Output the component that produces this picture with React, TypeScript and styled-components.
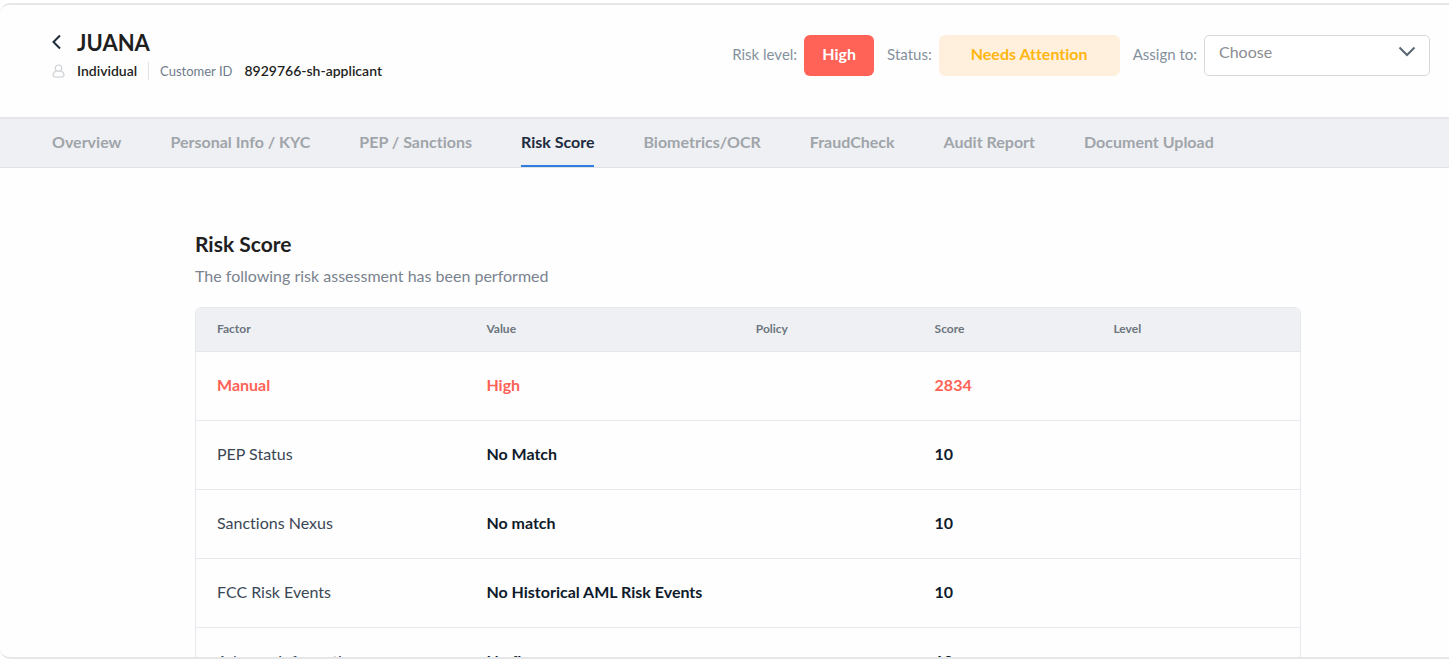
import React from "react";
import styled, { createGlobalStyle } from "styled-components";

const GlobalStyle = createGlobalStyle`
  *, *::before, *::after { box-sizing: border-box; }
  body {
    margin: 0;
    background: #fff;
    color: #1f1f22;
    font-family: Lato, "Liberation Sans", sans-serif;
    font-variant-ligatures: none;
    -webkit-font-smoothing: antialiased;
  }
  button, select { font-family: inherit; }
`;

const Shell = styled.div`
  display: flex;
  flex-direction: column;
  height: calc(100vh - 4px);
  margin: 3px 0 1px;
  overflow: hidden;
  background: #fefefe;
  border: 2px solid #e5e6e8;
  border-width: 2px 0;
  border-radius: 10px 0 0 10px;
`;

const Header = styled.header`
  display: flex;
  justify-content: space-between;
  align-items: flex-start;
  flex: none;
  min-height: 112px;
  padding: 24px 19px 0 52px;
`;

const Identity = styled.div`
  display: grid;
  grid-template-columns: 13px 1fr;
  column-gap: 12px;
  align-items: center;
`;

const BackButton = styled.button`
  display: flex;
  padding: 0 0 2px;
  border: 0;
  background: none;
  color: #1d2b3a;
  cursor: pointer;
`;

const Name = styled.h1`
  margin: 0;
  font-size: 22px;
  line-height: 28px;
  font-weight: 700;
`;

const PersonIcon = styled.svg`
  display: block;
  color: #cdd2d7;
`;

const Meta = styled.div`
  display: flex;
  align-items: center;
  height: 28px;
  font-size: 14px;
  line-height: 18px;
`;

const Kind = styled.span`
  padding-right: 11px;
  margin-right: 11px;
  border-right: 1px solid #dfe2e6;
  font-weight: 600;
`;

const MetaLabel = styled.span`
  margin-right: 12px;
  color: #6f7c8b;
  font-size: 13px;
`;

const Strong = styled.span`
  font-weight: 600;
`;

const Controls = styled.div`
  display: flex;
  align-items: center;
  gap: 13px;
  padding-top: 6px;
`;

const Field = styled.div`
  display: flex;
  align-items: center;
  gap: 7px;
`;

const FieldLabel = styled.label`
  padding-bottom: 4px;
  color: #84919d;
  font-size: 15px;
  line-height: 20px;
`;

const Pill = styled.span<{ $tone: "danger" | "warning" }>`
  display: flex;
  align-items: center;
  justify-content: center;
  width: ${(p) => (p.$tone === "danger" ? "70px" : "181px")};
  height: 41px;
  padding-bottom: 4px;
  border-radius: 6px;
  background: ${(p) => (p.$tone === "danger" ? "#ff6257" : "#fff0dd")};
  color: ${(p) => (p.$tone === "danger" ? "#fff" : "#ffb611")};
  font-size: 16px;
  font-weight: 700;
`;

const SelectBox = styled.div`
  display: grid;
  align-items: center;
  width: 226px;
  & > * { grid-area: 1 / 1; }
  & > svg {
    justify-self: end;
    margin: 0 14px 8px 0;
    pointer-events: none;
    color: #5a6772;
  }
`;

const Select = styled.select`
  appearance: none;
  width: 100%;
  height: 41px;
  padding: 0 40px 8px 14px;
  border: 1px solid #d5d8dc;
  border-radius: 5px;
  background: #fff;
  color: #8b8d91;
  font-size: 16px;
`;

const Tabs = styled.nav`
  display: flex;
  flex: none;
  gap: 49px;
  height: 51px;
  padding: 0 52px;
  background: #eff0f3;
  border-top: 2px solid #e5e7ea;
  border-bottom: 1px solid #dfe2e6;
`;

const Tab = styled.a<{ $active?: boolean }>`
  display: flex;
  align-items: center;
  border-bottom: 2px solid ${(p) => (p.$active ? "#2f7de1" : "transparent")};
  color: ${(p) => (p.$active ? "#1d2b3f" : "#9fa5aa")};
  font-size: 16px;
  font-weight: 700;
  line-height: 20px;
  text-decoration: none;
  white-space: nowrap;
`;

const Main = styled.main`
  flex: 1;
  min-height: 0;
  padding: 63px 148px 0 195px;
  overflow-y: auto;
  scrollbar-width: none;
`;

const Title = styled.h2`
  margin: 0;
  font-size: 21px;
  line-height: 26px;
  font-weight: 700;
`;

const Lead = styled.p`
  margin: 8px 0 20px;
  color: #7a838e;
  font-size: 16px;
  line-height: 22px;
`;

const ScoreTable = styled.table`
  width: 100%;
  table-layout: fixed;
  border: 1px solid #e8e9ef;
  border-radius: 6px;
  border-spacing: 0;
  overflow: hidden;
  text-align: left;
`;

const HeadCell = styled.th<{ $width?: string }>`
  width: ${(p) => p.$width ?? "auto"};
  height: 44px;
  padding: 0 21px 3px;
  background: #eff0f3;
  border-bottom: 1px solid #e5e8ec;
  color: #6c757e;
  font-size: 12px;
  font-weight: 700;
`;

const Row = styled.tr<{ $alert?: boolean }>`
  color: ${(p) => (p.$alert ? "#ff6257" : "#0f1b2b")};
  & > td:first-child {
    color: ${(p) => (p.$alert ? "#ff6257" : "#3a4654")};
    font-weight: ${(p) => (p.$alert ? 700 : 400)};
  }
`;

const Cell = styled.td`
  height: 69px;
  padding: 0 21px 4px;
  border-bottom: 1px solid #e8e9ef;
  font-size: 16px;
  font-weight: 700;
  white-space: nowrap;
`;

const tabs = [
  "Overview",
  "Personal Info / KYC",
  "PEP / Sanctions",
  "Risk Score",
  "Biometrics/OCR",
  "FraudCheck",
  "Audit Report",
  "Document Upload",
];

const columns = [
  { name: "Factor", width: "24.4%" },
  { name: "Value", width: "24.4%" },
  { name: "Policy", width: "16.2%" },
  { name: "Score", width: "16.2%" },
  { name: "Level" },
];

const rows = [
  { factor: "Manual", value: "High", score: "2834", alert: true },
  { factor: "PEP Status", value: "No Match", score: "10" },
  { factor: "Sanctions Nexus", value: "No match", score: "10" },
  { factor: "FCC Risk Events", value: "No Historical AML Risk Events", score: "10" },
  { factor: "Adverse information", value: "No fines", score: "10" },
];

export default function App() {
  return (
    <>
      <GlobalStyle />
      <Shell>
        <Header>
          <Identity>
            <BackButton aria-label="Back">
              <svg width="10" height="16" viewBox="0 0 10 16" fill="none" stroke="currentColor" strokeWidth="2">
                <path d="M8 1.5 1.500 8l6.500 6.500" />
              </svg>
            </BackButton>
            <Name>JUANA</Name>
            <PersonIcon width="13" height="14" viewBox="0 0 13 14" fill="none" stroke="currentColor" strokeWidth="1.2">
              <circle cx="6.5" cy="4.200" r="3.2" />
              <path d="M4.200 7C2.300 7.700 1 9.300 1 11.300 1 12.700 3 13.200 6.500 13.200s5.500-.5 5.500-1.900C12 9.300 10.700 7.700 8.800 7" />
            </PersonIcon>
            <Meta>
              <Kind>Individual</Kind>
              <MetaLabel>Customer ID</MetaLabel>
              <Strong>8929766-sh-applicant</Strong>
            </Meta>
          </Identity>
          <Controls>
            <Field>
              <FieldLabel as="span">Risk level:</FieldLabel>
              <Pill $tone="danger">High</Pill>
            </Field>
            <Field>
              <FieldLabel as="span">Status:</FieldLabel>
              <Pill $tone="warning">Needs Attention</Pill>
            </Field>
            <Field>
              <FieldLabel htmlFor="assignee">Assign to:</FieldLabel>
              <SelectBox>
                <Select id="assignee">
                  <option>Choose</option>
                </Select>
                <svg width="18" height="11" viewBox="0 0 18 11" fill="none" stroke="currentColor" strokeWidth="2">
                  <path d="m1.500 1.500 7.500 7.500 7.500-7.500" />
                </svg>
              </SelectBox>
            </Field>
          </Controls>
        </Header>
        <Tabs>
          {tabs.map((tab) => (
            <Tab key={tab} href="#" $active={tab === "Risk Score"}>
              {tab}
            </Tab>
          ))}
        </Tabs>
        <Main>
          <Title>Risk Score</Title>
          <Lead>The following risk assessment has been performed</Lead>
          <ScoreTable>
            <thead>
              <tr>
                {columns.map((column) => (
                  <HeadCell key={column.name} $width={column.width}>
                    {column.name}
                  </HeadCell>
                ))}
              </tr>
            </thead>
            <tbody>
              {rows.map((row) => (
                <Row key={row.factor} $alert={row.alert}>
                  <Cell>{row.factor}</Cell>
                  <Cell>{row.value}</Cell>
                  <Cell />
                  <Cell>{row.score}</Cell>
                  <Cell />
                </Row>
              ))}
            </tbody>
          </ScoreTable>
        </Main>
      </Shell>
    </>
  );
}
